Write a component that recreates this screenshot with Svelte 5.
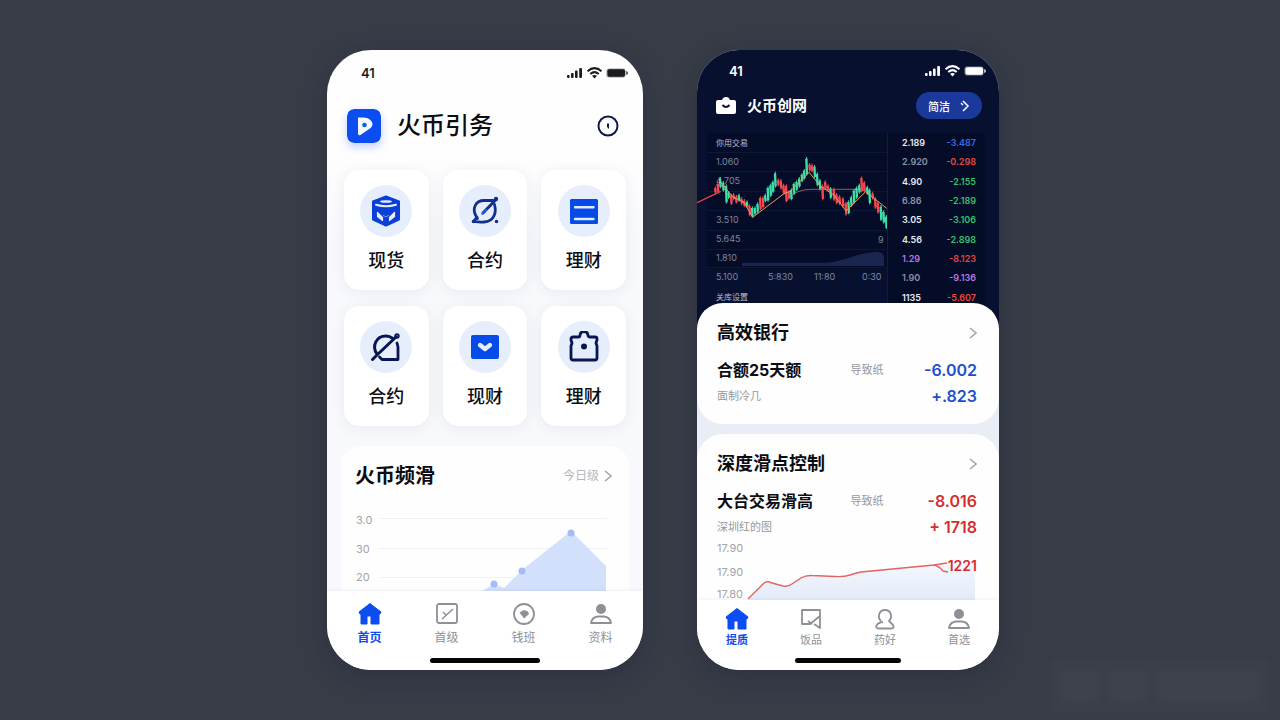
<script lang="ts">
	const features = [
		{ icon: 'cube', label: '现货' },
		{ icon: 'orbit', label: '合约' },
		{ icon: 'ledger', label: '理财' },
		{ icon: 'bow', label: '合约' },
		{ icon: 'inbox', label: '现财' },
		{ icon: 'clipboard', label: '理财' }
	];

	const homeTabs = [
		{ icon: 'home', label: '首页' },
		{ icon: 'chart', label: '首级' },
		{ icon: 'compass', label: '钱班' },
		{ icon: 'user', label: '资料' }
	];

	const tradeTabs = [
		{ icon: 'home', label: '提质' },
		{ icon: 'note', label: '饭品' },
		{ icon: 'bell', label: '药好' },
		{ icon: 'user', label: '首选' }
	];

	const orders = [
		{ price: '2.189', change: '-3.487', tone: 'blue' },
		{ price: '2.920', change: '-0.298', tone: 'red', dim: true },
		{ price: '4.90', change: '-2.155', tone: 'green' },
		{ price: '6.86', change: '-2.189', tone: 'green', dim: true },
		{ price: '3.05', change: '-3.106', tone: 'green' },
		{ price: '4.56', change: '-2.898', tone: 'green' },
		{ price: '1.29', change: '-8.123', tone: 'red', violet: true },
		{ price: '1.90', change: '-9.136', tone: 'violet', dim: true },
		{ price: '1135', change: '-5.607', tone: 'red' }
	];

	// x, high, low, rising
	const candles: [number, number, number, boolean][] = [
		[64, 184, 206, false], [72, 172, 204, false], [79, 156, 190, true], [88, 168, 200, true],
		[97, 178, 236, true], [104, 198, 222, true], [112, 206, 240, false], [119, 204, 226, false],
		[127, 210, 236, false], [135, 206, 230, true], [143, 216, 240, false], [151, 222, 246, false],
		[159, 226, 248, true], [167, 238, 274, false], [175, 244, 278, true], [183, 244, 270, true],
		[191, 232, 264, true], [199, 214, 256, false], [207, 214, 250, false], [214, 206, 232, true],
		[222, 184, 230, true], [230, 176, 216, true], [237, 166, 204, true], [244, 140, 188, true],
		[253, 160, 184, false], [261, 162, 194, false], [269, 176, 208, false], [277, 178, 232, false],
		[285, 196, 224, false], [292, 190, 226, true], [300, 172, 210, true], [308, 166, 198, true],
		[316, 156, 188, true], [324, 144, 172, true], [331, 132, 164, true], [338, 96, 152, true],
		[347, 114, 140, false], [354, 116, 142, false], [362, 120, 160, true], [370, 142, 184, true],
		[378, 162, 196, true], [386, 178, 226, false], [394, 166, 194, false], [402, 178, 200, false],
		[410, 186, 222, true], [420, 188, 228, false], [428, 204, 238, false], [437, 210, 240, false],
		[447, 216, 248, false], [456, 230, 272, false], [464, 226, 268, true], [472, 212, 246, true],
		[480, 192, 236, true], [488, 184, 222, true], [496, 176, 206, true], [503, 154, 202, false],
		[511, 168, 202, false], [520, 182, 210, true], [527, 190, 238, true], [536, 200, 224, false],
		[544, 216, 252, false], [552, 228, 266, false], [561, 240, 288, true], [569, 256, 296, true],
		[577, 270, 312, true]
	];

	const priceScale = [
		{ y: 32, text: '1.060' },
		{ y: 51, text: '4.705' },
		{ y: 90, text: '3.510' },
		{ y: 109, text: '5.645' },
		{ y: 128, text: '1.810' }
	];

	const timeScale = [
		{ x: 19, text: '5.100' },
		{ x: 71, text: '5:830' },
		{ x: 117, text: '11:80' },
		{ x: 165, text: '0:30' }
	];
</script>

{#snippet status()}
	<div class="status">
		<span>41</span>
		<svg width="62" height="14" viewBox="0 0 62 14" fill="currentColor" aria-hidden="true">
			<rect x="1" y="9" width="2.6" height="3" rx="1" />
			<rect x="5" y="7" width="2.6" height="5" rx="1" />
			<rect x="9" y="4.5" width="2.6" height="7.5" rx="1" />
			<rect x="13.2" y="2" width="2.8" height="10" rx="1" />
			<g fill="none" stroke="currentColor" stroke-width="2">
				<path d="M21.5 5.2Q28.5-1 35.5 5.2" />
				<path d="M24.3 8Q28.5 4.3 32.7 8" />
			</g>
			<path d="M26 9.8Q28.5 8 31 9.8L28.5 12.5Z" />
			<rect x="40.5" y="2.5" width="19" height="9" rx="2.5" opacity=".45" />
			<rect x="41.5" y="3.2" width="17.5" height="7.6" rx="2" />
			<path d="M60.3 5v4q1.5-.6 1.5-2t-1.5-2z" />
		</svg>
	</div>
{/snippet}

{#snippet arrow()}
	<svg width="8" height="14" viewBox="0 0 8 14" aria-hidden="true" class="arrow">
		<path d="M1 2l6 5-6 5" fill="none" stroke="currentColor" stroke-width="1.5" />
	</svg>
{/snippet}

{#snippet featureIcon(name: string)}
	<svg width="32" height="32" viewBox="0 0 32 32" fill="none" stroke-linecap="round" stroke-linejoin="round" aria-hidden="true">
		{#if name === 'cube'}
			<path d="M16 1.5L29 6.5v18L16 30.5 3 24.500V6.500z" fill="#0b3fd8" stroke="#0b3fd8" stroke-width="2" />
			<ellipse cx="16" cy="6.500" rx="6" ry="1.300" fill="#e6edfb" />
			<path d="M6 9.800Q16 12.800 26 9.800" stroke="#e6edfb" stroke-width="2" />
			<path d="M7.500 17.500v4l5 4v-3zM24.500 17.500v4l-5 4v-3z" fill="#e6edfb" stroke="#e6edfb" stroke-width="1.200" />
			<path d="M13.500 20.500l2.500 1.500 2.500-1.500" stroke="#7f9ff0" stroke-width="1" />
		{:else if name === 'orbit'}
			<path d="M24 5.500H15C6 5.500 3.500 14 6.500 20l2 3.500M25.500 9.500c2.500 9-1 17-10.500 17.500-4 .2-6.500-.5-10.500-.3L8 22" stroke="#10308e" stroke-width="2.800" />
			<path d="M14 18L27 4.500" stroke="#10308e" stroke-width="3" />
			<path d="M13 19l4.500-4.500" stroke="#2563eb" stroke-width="1.600" />
			<circle cx="27" cy="4" r="2.200" fill="#10308e" />
			<circle cx="27.500" cy="26.500" r="1.800" fill="#10308e" />
			<circle cx="4.500" cy="26.500" r="1.800" fill="#10308e" />
		{:else if name === 'ledger'}
			<rect x="2" y="4" width="28" height="25" rx="1.500" fill="#064be8" />
			<path d="M7 12.200h18.500M7 24h18.500" stroke="#dfe9ff" stroke-width="2.400" />
		{:else if name === 'bow'}
			<path d="M7 23C1.500 15.500 6 5 16 5c3 0 5 1 7 2.500" stroke="#091653" stroke-width="3" />
			<path d="M27 12l1 4v12.500H12L9.500 26" stroke="#091653" stroke-width="2.800" />
			<path d="M2.500 28.500l4-4L27 5" stroke="#091653" stroke-width="3" />
			<circle cx="27" cy="5" r="2.700" fill="#091653" />
			<circle cx="27.300" cy="4.500" r="1" fill="#2858c8" />
		{:else if name === 'inbox'}
			<rect x="2" y="4" width="28" height="24" rx="2" fill="#064be8" />
			<path d="M11 14l5 4 5-4" stroke="#e6edfb" stroke-width="4.400" />
		{:else}
			<path d="M5 6h5.500q1.500 0 1.500-2 .5-3.500 4-3.500T20 4q0 2 1.500 2H27q2 0 2 2v1l-1 3 1 3v12q0 2-2 2H5q-2 0-2-2V15l1-3-1-3V8q0-2 2-2z" stroke="#091653" stroke-width="2.800" />
			<circle cx="16" cy="15.500" r="3" fill="#091653" />
		{/if}
	</svg>
{/snippet}

{#snippet tabIcon(name: string)}
	<svg width="24" height="24" viewBox="0 0 24 24" fill="none" stroke="currentColor" stroke-width="1.8" stroke-linejoin="round" aria-hidden="true">
		{#if name === 'home'}
			<path d="M12 1.500L1 10l1 2h1v10h6v-8h4v8h8V12h1l1-2z" fill="currentColor" stroke-width="1" />
		{:else if name === 'chart'}
			<rect x="2" y="2" width="20" height="19" rx="2" />
			<path d="M7 17L18 7M8 10l3 3" stroke-width="1.500" />
		{:else if name === 'compass'}
			<circle cx="12" cy="12" r="10" />
			<path d="M7.500 10.500L12 8l4 1.500 1 2.500-5 4.500z" fill="currentColor" stroke="none" />
		{:else if name === 'note'}
			<path d="M21 15V3H3v14h8l10-8v12l-6-4" />
			<path d="M9 14l4 3" />
		{:else if name === 'bell'}
			<path d="M8 14c-4-4-2-11 4-11s8 7 4 11l4 4q2 3.500-2 3.500H6q-4 0-2.500-3Q5 15.500 10 15" />
		{:else}
			<circle cx="12" cy="7" r="5" fill="currentColor" stroke="none" />
			<path d="M2 21q1-6 7-6.500h6q6 .5 7 6.500z" />
		{/if}
	</svg>
{/snippet}

{#snippet tabBar(tabs: { icon: string; label: string }[])}
	<nav class="tabs">
		<div class="tab-row">
			{#each tabs as tab, i}
				<button type="button" class="tab" class:active={i === 0}>
					{@render tabIcon(tab.icon)}
					<span>{tab.label}</span>
				</button>
			{/each}
		</div>
		<div class="indicator"></div>
	</nav>
{/snippet}

<main class="stage">
	<section class="phone home">
		{@render status()}
		<header class="home-header">
			<svg class="logo" width="34" height="34" viewBox="0 0 34 34" aria-hidden="true">
				<rect width="34" height="34" rx="7" fill="#0b4df0" />
				<path d="M11 8.500h5c6 0 9.500 3.500 9.500 6.800 0 2.700-2 4-5.500 6.200l-6.500 4.500q-2.500 1-2.500-1.500z" fill="#f3f8ff" />
				<circle cx="17.500" cy="16" r="2.300" fill="#0b63d8" />
			</svg>
			<h1>火币引务</h1>
			<button type="button" class="round" aria-label="提示">
				<svg width="22" height="22" viewBox="0 0 22 22" aria-hidden="true">
					<circle cx="11" cy="11" r="9.500" fill="none" stroke="#0d1b4c" stroke-width="2" />
					<path d="M10 8.500h2v5h-1l-1-2z" fill="#0d1b4c" />
				</svg>
			</button>
		</header>

		<div class="features">
			{#each features as feature}
				<button type="button" class="feature">
					<span class="bubble">{@render featureIcon(feature.icon)}</span>
					<span class="feature-label">{feature.label}</span>
				</button>
			{/each}
		</div>

		<article class="trend">
			<div class="heading">
				<h2>火币频滑</h2>
				<a href="#today">今日级 {@render arrow()}</a>
			</div>
			<svg class="trend-chart" viewBox="0 0 257 88" aria-hidden="true">
				<g stroke="#f0f1f4">
					<path d="M24 15.500h228M24 45.500h228M24 74.500h228" />
				</g>
				<path d="M127 88l12-7 10 4 18-18 49-39 35 35v25z" fill="#d3e0fc" />
				<g fill="#a4bbf3">
					<circle cx="139" cy="81" r="3.500" />
					<circle cx="167" cy="68" r="3.500" />
					<circle cx="216" cy="30" r="3.500" />
				</g>
				<g class="scale">
					<text x="1" y="21">3.0</text>
					<text x="1" y="50">30</text>
					<text x="1" y="78">20</text>
				</g>
			</svg>
		</article>
		{@render tabBar(homeTabs)}
	</section>

	<section class="phone trade">
		<div class="market">
			{@render status()}
			<header class="trade-header">
				<svg width="22" height="20" viewBox="0 0 22 20" aria-hidden="true">
					<path d="M3 4h4q1-3 4-3t4 3h4q2 0 2 2v10q0 2-2 2H3q-2 0-2-2V6q0-2 2-2z" fill="#fff" />
					<path d="M7.500 9Q11 13 14.500 9" fill="none" stroke="#0a1232" stroke-width="2" />
				</svg>
				<h1>火币创网</h1>
				<button type="button" class="pill">
					简洁
					<svg width="10" height="14" viewBox="0 0 10 14" aria-hidden="true">
						<path d="M3 2l5 5-5 5M1 4l2 2" fill="none" stroke="currentColor" stroke-width="1.5" />
					</svg>
				</button>
			</header>

			<div class="board">
				<svg class="candles" viewBox="0 0 190 172" aria-hidden="true">
					<rect x="10" width="180" height="136" fill="#050c28" />
					<path d="M10 19.500h180M10 38.500h180M10 58.500h180M10 77.500h180M10 97.500h180M10 116.500h180M10 134.500h180" stroke="#0d1738" />
					<path d="M45 130h82c20-1 32-10 52-11 6 0 8 2 8 6v8H45z" fill="#1b2650" />
					<g class="muted">
						<text class="bright" x="19" y="13">你用交易</text>
						{#each priceScale as mark}
							<text x="19" y={mark.y}>{mark.text}</text>
						{/each}
						{#each timeScale as mark}
							<text x={mark.x} y="147">{mark.text}</text>
						{/each}
						<text x="181" y="110">9</text>
						<text class="bright" x="19" y="167">关库设置</text>
					</g>
					<g transform="translate(-3 -8) scale(.3333)" fill="none" stroke-width="3">
						<path d="M277 222Q310 193 350 193H515" stroke="#8a6259" />
						{#each candles as [x, high, low, rising]}
							<path d="M{x} {high}V{low}" stroke={rising ? '#3fe0a8' : '#fa4650'} />
							<path d="M{x - 1} {high + 5}L{x + 1} {low - 4}" stroke={rising ? '#3fe0a8' : '#fa4650'} stroke-width="7" />
						{/each}
						<path d="M9 233L80 199" stroke="#ef4444" stroke-width="4" />
						<path d="M80 170L115 215 150 232 176 277 270 206 290 198 345 142 380 184 420 210 456 258 515 200 578 250" stroke="#e6a15c" />
					</g>
				</svg>
				<table>
					<tbody>
						{#each orders as order}
							<tr>
								<td class:dim={order.dim} class:violet={order.violet}>{order.price}</td>
								<td class={order.tone}>{order.change}</td>
							</tr>
						{/each}
					</tbody>
				</table>
			</div>
		</div>

		<div class="sheets">
			<article class="sheet">
				<div class="heading">
					<h2>高效银行</h2>
					{@render arrow()}
				</div>
				<div class="quote gain">
					<strong>合额25天额</strong>
					<span>导致纸</span>
					<b>-6.002</b>
				</div>
				<div class="quote-note gain">
					<span>面制冷几</span>
					<b>+.823</b>
				</div>
			</article>

			<article class="sheet last">
				<div class="heading">
					<h2>深度滑点控制</h2>
					{@render arrow()}
				</div>
				<div class="quote loss">
					<strong>大台交易滑高</strong>
					<span>导致纸</span>
					<b>-8.016</b>
				</div>
				<div class="quote-note loss">
					<span>深圳红的图</span>
					<b>+ 1718</b>
				</div>
				<svg class="depth-chart" viewBox="0 0 260 63" aria-hidden="true">
					<defs>
						<linearGradient id="depth" x2="0" y2="1">
							<stop stop-color="#f4f7fd" />
							<stop offset="1" stop-color="#e3ebf9" />
						</linearGradient>
					</defs>
					<path d="M31 63L49 45 69 50Q82 39 89 39L127 40 144 35 217 28 258 26V63z" fill="url(#depth)" />
					<path d="M31 62L46 47Q49 43 55 46L66 49Q71 50 75 47L84 41Q89 38 95 38.500L118 39.500Q127 40 133 38T144 35L217 28 230 26M217 28q5 1 9 6l5 1" fill="none" stroke="#e26464" stroke-width="1.4" />
					<g class="scale">
						<text x="0" y="15">17.90</text>
						<text x="0" y="39">17.90</text>
						<text x="0" y="61">17.80</text>
					</g>
					<text class="last-price" x="260" y="34">1221</text>
				</svg>
			</article>
		</div>
		{@render tabBar(tradeTabs)}
	</section>

	<div class="watermark" aria-hidden="true"><i></i><i></i><i></i></div>
</main>

<style>
	:global(body) {
		background: #373c47;
	}

	.stage {
		position: relative;
		box-sizing: border-box;
		min-height: 100vh;
		padding: 50px 0 50px 46px;
		display: flex;
		align-items: center;
		justify-content: center;
		gap: 54px;
		overflow: hidden;
		font-family: Inter, 'Noto Sans CJK SC', sans-serif;
		color: #0b0d12;
	}

	h1,
	h2 {
		margin: 0;
		font-weight: 500;
	}
	button {
		padding: 0;
		border: 0;
		background: none;
		font: inherit;
		color: inherit;
		cursor: pointer;
	}
	svg {
		display: block;
	}

	.phone {
		flex: 1 1 0;
		overflow: hidden;
		display: flex;
		flex-direction: column;
		box-shadow: 0 6px 24px rgba(20, 24, 38, 0.25);
	}
	.home {
		max-width: 316px;
		border-radius: 44px;
		background: linear-gradient(#fefefe 100px, #f8f9fc 190px);
	}
	.trade {
		max-width: 302px;
		border-radius: 42px;
		background: #e9edf5;
	}

	.status {
		display: flex;
		align-items: center;
		justify-content: space-between;
		height: 46px;
		padding: 0 15px 0 34px;
		font-size: 13px;
		font-weight: 600;
		color: #1b1c20;
	}
	.trade .status {
		height: 42px;
		padding: 0 13px 0 32px;
		color: #fff;
	}

	.home-header {
		display: flex;
		align-items: center;
		gap: 16px;
		height: 60px;
		padding: 0 24px 0 20px;
	}
	.home-header h1 {
		font-size: 24px;
		line-height: 32px;
	}
	.logo {
		border-radius: 7px;
		box-shadow: 0 4px 8px rgba(11, 77, 240, 0.25);
	}
	.round {
		margin-left: auto;
	}

	.features {
		display: grid;
		grid-template-columns: repeat(3, 1fr);
		gap: 16px 14px;
		padding: 14px 17px 20px;
	}
	.feature {
		display: flex;
		flex-direction: column;
		align-items: center;
		gap: 12px;
		padding: 15px 0 17px;
		border-radius: 15px;
		background: #fff;
		box-shadow: 0 2px 14px rgba(30, 50, 110, 0.08);
	}
	.bubble {
		display: grid;
		place-items: center;
		width: 52px;
		height: 52px;
		border-radius: 50%;
		background: #e7eefb;
	}
	.feature-label {
		font-size: 18px;
		line-height: 24px;
		font-weight: 500;
	}

	.heading {
		display: flex;
		align-items: center;
		justify-content: space-between;
		line-height: 24px;
	}
	.heading h2 {
		font-weight: 700;
	}
	.arrow {
		color: #a3a5aa;
	}

	.trend {
		margin: 0 14px;
		padding: 18px 17px 0 14px;
		border-radius: 20px 20px 0 0;
		background: #fefefe;
	}
	.trend h2 {
		font-size: 20px;
	}
	.trend a {
		display: flex;
		align-items: center;
		gap: 5px;
		font-size: 12px;
		color: #b4b6bb;
		text-decoration: none;
	}
	.trend-chart {
		width: 100%;
		margin-top: 15px;
	}
	.scale {
		font-size: 11px;
		fill: #a2a4aa;
	}

	.tabs {
		position: relative;
		padding: 11px 4px 7px;
		background: #fff;
		box-shadow: 0 -1px 3px rgba(30, 40, 80, 0.06);
	}
	.tab-row {
		display: grid;
		grid-template-columns: repeat(4, 1fr);
	}
	.tab {
		display: flex;
		flex-direction: column;
		align-items: center;
		gap: 4px;
		font-size: 12px;
		line-height: 16px;
		color: #8e9096;
	}
	.tab.active {
		color: #0b4df0;
		font-weight: 700;
	}
	.indicator {
		width: 110px;
		height: 5px;
		margin: 12px auto 0;
		border-radius: 3px;
		background: #050507;
	}
	.trade .tabs {
		padding: 7px 3px;
	}
	.trade .tab {
		gap: 1px;
		font-size: 11px;
	}
	.trade .indicator {
		width: 106px;
		margin-top: 10px;
	}

	.market {
		padding-bottom: 26px;
		background: #081030;
	}
	.trade-header {
		display: flex;
		align-items: center;
		gap: 10px;
		padding: 0 17px 0 18px;
		color: #fff;
	}
	.trade-header h1 {
		font-size: 15px;
		line-height: 20px;
		font-weight: 700;
	}
	.pill {
		display: flex;
		align-items: center;
		gap: 10px;
		height: 27px;
		margin-left: auto;
		padding: 0 12px;
		border-radius: 14px;
		background: #1b399b;
		font-size: 11px;
		font-weight: 500;
	}

	.board {
		display: grid;
		grid-template-columns: 190fr 98fr;
		margin: 14px 14px 0 0;
	}
	.candles {
		width: 100%;
	}
	.muted {
		font-size: 9px;
		fill: #7e869f;
	}
	.bright {
		fill: #b9bfce;
		font-size: 8px;
	}
	table {
		height: 174px;
		padding: 0 9px 0 14px;
		border-spacing: 0;
		border-left: 1px solid #111c40;
		background: #050c28;
		font-size: 9px;
		font-weight: 600;
	}
	td {
		padding: 0;
		color: #e8ebf3;
	}
	td:last-child {
		text-align: right;
	}
	td.dim {
		color: #8b92a8;
	}
	td.blue {
		color: #3569ee;
	}
	td.red {
		color: #e8463f;
	}
	td.green {
		color: #35c06a;
	}
	td.violet {
		color: #b57be0;
	}

	.sheets {
		display: grid;
		gap: 10px;
		margin-top: -30px;
	}
	.sheet {
		padding: 18px 22px 18px 20px;
		border-radius: 26px;
		background: #fefefe;
	}
	.sheet.last {
		padding-bottom: 0;
		border-radius: 26px 26px 0 0;
	}
	.sheet h2 {
		font-size: 18px;
	}
	.quote {
		display: grid;
		grid-template-columns: 134fr 32fr 94fr;
		align-items: center;
		margin-top: 13px;
		line-height: 24px;
	}
	.quote strong {
		font-size: 16px;
		font-weight: 700;
		white-space: nowrap;
	}
	.quote span,
	.quote-note span {
		font-size: 11px;
		color: #96989e;
		white-space: nowrap;
	}
	.quote b,
	.quote-note b {
		font-size: 16px;
		font-weight: 600;
		text-align: right;
	}
	.quote-note {
		display: flex;
		align-items: center;
		justify-content: space-between;
		margin-top: 4px;
		line-height: 20px;
	}
	.gain b {
		color: #1c50cf;
	}
	.loss b {
		color: #d42e30;
	}
	.depth-chart {
		width: 100%;
	}
	.last-price {
		font-size: 14px;
		font-weight: 600;
		text-anchor: end;
		fill: #d42e30;
	}

	.watermark {
		position: absolute;
		right: 10px;
		bottom: 8px;
		display: flex;
		gap: 12px;
		padding: 12px;
		background: rgba(255, 255, 255, 0.02);
		filter: blur(3px);
	}
	.watermark i {
		width: 36px;
		height: 28px;
		background: rgba(255, 255, 255, 0.02);
	}
	.watermark i:last-child {
		width: 100px;
	}
</style>
